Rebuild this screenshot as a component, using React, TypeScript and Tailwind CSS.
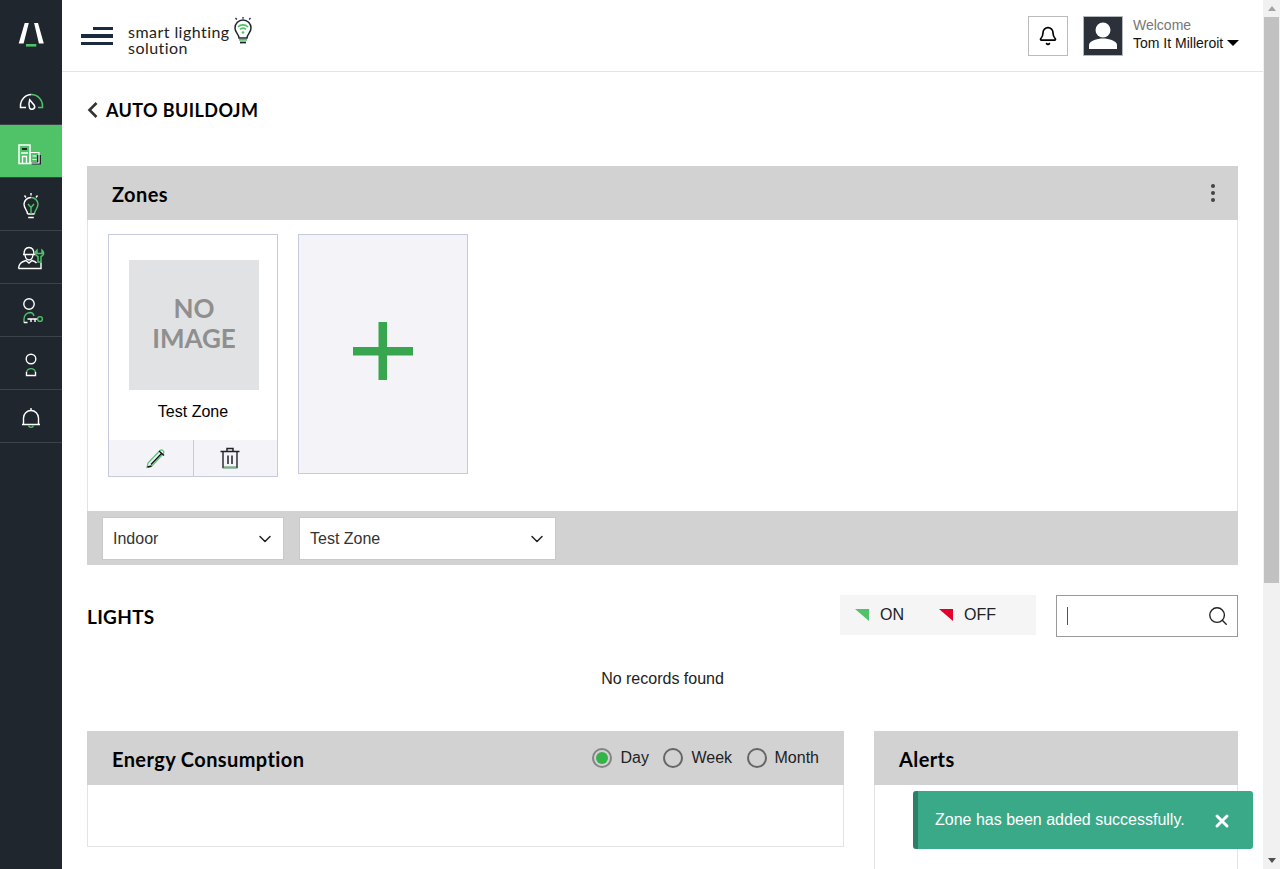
import { Bell, ChevronDown, Search, X } from 'lucide-react'

const display = 'font-["Lato",sans-serif]'

function NavDash() {
  return (
    <svg width="62" height="52" viewBox="0 0 62 52" fill="none" strokeWidth="1.5">
      <path d="M26 35.5H20.5V34A11.2 11.2 0 0 1 31.5 22.5" stroke="#fff" />
      <path d="M31.5 22.5A11.2 11.2 0 0 1 42.5 34V35.5H38" stroke="#4fc268" />
      <path d="M29.7 27.8L34.4 33.5A2.6 2.6 0 0 1 29.5 35.6C28.7 33.5 29 30 29.7 27.8Z" stroke="#fff" />
    </svg>
  )
}

function NavBuilding() {
  return (
    <svg width="62" height="52" viewBox="0 0 62 52" fill="none">
      <path d="M37 30H41V39.5H32V37H37Z" fill="#1f262e" />
      <path d="M19 20H30V38.5H19Z" stroke="#fff" strokeWidth="1.5" />
      <path d="M30 27.5H39V38H30Z" stroke="#fff" strokeWidth="1.2" />
      <path d="M21 28H28M22.5 38V31.5H26.5V38" stroke="#fff" strokeWidth="1.3" />
      <path d="M22 23H27V25H22Z" fill="#1f262e" />
      <path d="M32.5 31H36.5M32.5 34.5H36.5" stroke="#fff" strokeWidth="1.2" />
    </svg>
  )
}

function NavBulb() {
  return (
    <svg width="62" height="52" viewBox="0 0 62 52" fill="none" strokeWidth="1.4">
      <path d="M27.5 36C27.5 31.5 24 31 24 26A7 7 0 0 1 31 19.5" stroke="#fff" />
      <path d="M31 19.5A7 7 0 0 1 38 26C38 31 34.5 31.5 34.5 36" stroke="#4fc268" />
      <path d="M27.5 36H34.5M28.2 39.5H33.8" stroke="#fff" />
      <path d="M28 26L31 29.5L34 26M31 29.5V36" stroke="#4fc268" />
      <path d="M31 15V17.5M24.5 17.5L26 19.5M37.5 17.5L36 19.5" stroke="#fff" />
    </svg>
  )
}

function NavEngineer() {
  return (
    <svg width="62" height="52" viewBox="0 0 62 52" fill="none" strokeWidth="1.4">
      <path d="M24 23.5C24 19 26 16.5 29 16.5S34 19 34 23.5M23 23.5H35" stroke="#fff" />
      <path d="M25 24C25.5 27.5 27 29 29 29S32.5 27.5 33 24" stroke="#fff" />
      <path d="M18.5 37.5C19 32.5 21 31 26 29.5L29 32L32 29.5C34 30 35.5 30.5 36.5 32M18.5 37.5H41V31.5" stroke="#fff" />
      <path d="M37 19C34.5 21 35 24.5 38 25.5V31H41V25.5C44 24.5 44.5 21 42 19V22.5H37Z" stroke="#4fc268" strokeWidth="1.5" />
    </svg>
  )
}

function NavKey() {
  return (
    <svg width="62" height="52" viewBox="0 0 62 52" fill="none" strokeWidth="1.4">
      <circle cx="29" cy="20" r="5.2" stroke="#fff" />
      <path d="M24 39V35A6.5 6.5 0 0 1 30 28.5C32 28.5 33.5 30 34 32" stroke="#4fc268" />
      <path d="M24 38.5H27.5M27.5 35H38" stroke="#fff" />
      <path d="M31 35V38M35 35V38" stroke="#fff" />
      <circle cx="40" cy="35" r="2.4" stroke="#4fc268" />
    </svg>
  )
}

function NavUser() {
  return (
    <svg width="62" height="52" viewBox="0 0 62 52" fill="none" strokeWidth="1.4">
      <circle cx="31" cy="22" r="4.8" stroke="#fff" />
      <path d="M26.5 35A4.7 4.7 0 0 1 35.5 35" stroke="#4fc268" />
      <path d="M26.5 35V38.5H35.5V35" stroke="#fff" />
    </svg>
  )
}

function NavBell() {
  return (
    <svg width="62" height="52" viewBox="0 0 62 52" fill="none" strokeWidth="1.4">
      <path d="M23.5 34V28A7.5 7.5 0 0 1 38.5 28V34" stroke="#fff" />
      <path d="M22 34.5H40M31 18V20.5" stroke="#fff" />
      <path d="M28.5 35.5A2.6 2.6 0 0 0 33.5 35.5" stroke="#4fc268" />
    </svg>
  )
}

const navItems = [NavDash, NavBuilding, NavBulb, NavEngineer, NavKey, NavUser, NavBell]

function Sidebar() {
  return (
    <aside className="w-[62px] shrink-0 bg-[#1f262e]">
      <div className="h-[72px] flex items-center justify-center">
        <svg width="62" height="72" viewBox="0 0 62 72">
          <path d="M24.7 23H28.8L23.6 43.5H18.7ZM34.1 23H38L43.8 43.5H38.9Z" fill="#fff" />
          <path d="M26 44H36.3V46.6H26Z" fill="#4fc268" />
        </svg>
      </div>
      {navItems.map((Icon, i) => (
        <div
          key={i}
          className={`h-[53px] border-b border-[#3c4249] ${i === 1 ? 'bg-[#50c368]' : ''}`}
        >
          <Icon />
        </div>
      ))}
    </aside>
  )
}

function HeaderBulb() {
  return (
    <svg width="22" height="30" viewBox="0 0 22 30" fill="none" className="ml-[2px] -mt-[12px]">
      <path d="M7 23C7 19 3 18 3 13A8 8 0 0 1 19 13C19 18 15 19 15 23Z" stroke="#1f262e" strokeWidth="1.5" />
      <path d="M7 24.8H15" stroke="#4fc268" strokeWidth="1.8" />
      <path d="M8 27.5H14" stroke="#1f262e" strokeWidth="1.8" />
      <path d="M6 12A7 7 0 0 1 16 12M8 14.5A4 4 0 0 1 14 14.5" stroke="#4fc268" strokeWidth="1.6" />
      <circle cx="11" cy="17.5" r="1.3" fill="#4fc268" />
      <path d="M11 2V3.8M3.5 3L4.8 4.5M18.5 3L17.2 4.5" stroke="#1f262e" strokeWidth="1.3" />
    </svg>
  )
}

function Header() {
  return (
    <header className="h-[72px] shrink-0 border-b border-[#e4e4e4] flex items-center pl-[19px] pr-[24px] bg-white">
      <div className="w-[32px] flex flex-col items-end gap-[4px]">
        <span className="block h-[3px] w-[20px] bg-[#1a2a3f]" />
        <span className="block h-[4px] w-[32px] bg-[#1a2a3f]" />
        <span className="block h-[3px] w-[32px] bg-[#1a2a3f]" />
      </div>
      <div className={`ml-[15px] mt-[9px] text-[16px] leading-[16px] tracking-[0.45px] text-[#222] ${display}`}>
        <div>smart lighting</div>
        <div>solution</div>
      </div>
      <HeaderBulb />
      <div className="ml-auto flex items-center">
        <div className="w-[40px] h-[40px] border border-[#bbbbbb] flex items-center justify-center">
          <Bell size={20} strokeWidth={2} color="#000" />
        </div>
        <div className="ml-[15px] w-[40px] h-[40px] bg-[#2c3038] border border-[#b5b8bc]">
          <svg width="38" height="38" viewBox="0 0 38 38">
            <circle cx="19" cy="13" r="7.5" fill="#fff" />
            <path d="M5 32V28C5 24 13 21.5 19 21.5S33 24 33 28V32Z" fill="#fff" />
          </svg>
        </div>
        <div className="ml-[10px] -mt-[4px] font-['Liberation_Sans',sans-serif] text-[14px] leading-[18px] w-[106px]">
          <div className="text-[#777777]">Welcome</div>
          <div className="flex items-center whitespace-nowrap text-[#111]">
            Tom It Milleroit
            <span className="ml-[4px] shrink-0 border-x-[6px] border-x-transparent border-t-[6px] border-t-black" />
          </div>
        </div>
      </div>
    </header>
  )
}

function SectionBar({ title, children }: { title: string; children?: React.ReactNode }) {
  return (
    <div className="h-[54px] bg-[#d2d2d2] flex items-center justify-between pl-[25px] pr-[25px]">
      <h2 className={`pt-[1px] text-[20px] font-bold text-black tracking-[0.4px] ${display}`}>{title}</h2>
      {children}
    </div>
  )
}

function ZoneCard() {
  return (
    <div className="w-[170px] h-[243px] border border-[#c5cbdc] flex flex-col bg-white">
      <div className={`mt-[25px] ml-[20px] w-[130px] h-[130px] bg-[#e1e2e3] flex items-center justify-center text-center text-[#8f8f8f] font-bold text-[26px] leading-[30px] ${display}`}>
        <div className="-mt-[4px]">NO<br />IMAGE</div>
      </div>
      <div className="mt-[13px] text-center text-[16px] leading-[18px] text-black font-['Liberation_Sans',sans-serif]">Test Zone</div>
      <div className="mt-auto h-[36px] bg-[#f3f3f8] flex">
        <div className="w-[85px] border-r border-[#c5cbdc] flex items-center justify-center pl-[10px]">
          <svg width="24" height="24" viewBox="0 0 24 24" fill="none">
            <path d="M4 17L16 4.5C18 3 21 5.5 19.5 7.5L7.5 20.5L3 21.5Z" stroke="#5ac377" strokeWidth="1.2" />
            <path d="M7 18.5L18 7M15 5L20 9.5M7.5 20L3.5 21" stroke="#111" strokeWidth="1.3" />
          </svg>
        </div>
        <div className="flex-1 flex items-center justify-center pr-[12px]">
          <svg width="22" height="24" viewBox="0 0 22 24" fill="none">
            <path d="M1.5 5.5H20.5M8 5V2.5H14V5" stroke="#222" strokeWidth="1.5" />
            <path d="M4 6V21.5H18V6" stroke="#222" strokeWidth="1.4" />
            <path d="M4.5 21.5H17.5" stroke="#5ac377" strokeWidth="1.6" />
            <path d="M9 9.5V18M13 9.5V18" stroke="#222" strokeWidth="1.5" />
          </svg>
        </div>
      </div>
    </div>
  )
}

function AddCard() {
  return (
    <div className="ml-[20px] w-[170px] h-[240px] border border-[#c5cbdc] bg-[#f3f3f8] flex items-center justify-center">
      <svg width="60" height="60" viewBox="0 0 60 60" className="-mt-[6px]">
        <path d="M25.5 1H34V59H25.5ZM0 26H60V34.5H0Z" fill="#38a64f" />
      </svg>
    </div>
  )
}

function SelectBox({ label, width }: { label: string; width: string }) {
  return (
    <div className={`${width} h-[43px] bg-white border border-[#c9c9c9] flex items-center justify-between pl-[10px] pr-[8px] text-[16px] text-[#333] font-['Liberation_Sans',sans-serif]`}>
      {label}
      <ChevronDown size={20} strokeWidth={1.8} color="#222" />
    </div>
  )
}

function Radio({ label, checked }: { label: string; checked?: boolean }) {
  return (
    <div className="flex items-center gap-[8px] text-[16px] text-[#222] font-['Liberation_Sans',sans-serif]">
      <span className={`w-[20px] h-[20px] rounded-full border-2 flex items-center justify-center ${checked ? 'border-[#848484]' : 'border-[#666666]'}`}>
        {checked && <span className="w-[12px] h-[12px] rounded-full bg-[#36b24a]" />}
      </span>
      {label}
    </div>
  )
}

function LegendMark({ color }: { color: string }) {
  return (
    <svg width="14" height="12" viewBox="0 0 14 12">
      <path d="M0 0H14V12Z" fill={color} />
    </svg>
  )
}

function Scrollbar() {
  return (
    <div className="w-[17px] shrink-0 bg-[#f1f1f1] flex flex-col items-center">
      <div className="h-[17px] flex items-center justify-center">
        <span className="border-x-[4px] border-x-transparent border-b-[5px] border-b-[#a3a3a3]" />
      </div>
      <div className="w-[15px] h-[566px] bg-[#c1c1c1]" />
      <div className="mt-auto h-[17px] flex items-center justify-center">
        <span className="border-x-[4px] border-x-transparent border-t-[5px] border-t-[#505050]" />
      </div>
    </div>
  )
}

export default function App() {
  return (
    <div className="relative h-[869px] w-[1280px] flex overflow-hidden bg-white">
      <Sidebar />
      <main className="flex-1 min-w-0 flex flex-col overflow-hidden">
        <Header />
        <div className="px-[25px]">
          <div className="mt-[24px] h-[28px] flex items-center">
            <svg width="12" height="18" viewBox="0 0 12 18" fill="none">
              <path d="M9.5 2L2.5 9L9.5 16" stroke="#333" strokeWidth="2.6" />
            </svg>
            <h1 className={`ml-[7px] text-[18px] font-bold text-black tracking-[0.4px] ${display}`}>AUTO BUILDOJM</h1>
          </div>

          <section className="mt-[42px]">
            <SectionBar title="Zones">
              <div className="flex flex-col gap-[3px] -mr-[2px]">
                <span className="w-[4px] h-[4px] rounded-full bg-[#444]" />
                <span className="w-[4px] h-[4px] rounded-full bg-[#444]" />
                <span className="w-[4px] h-[4px] rounded-full bg-[#444]" />
              </div>
            </SectionBar>
            <div className="h-[291px] border-x border-[#e3e3e3] pl-[20px] pt-[14px] flex items-start">
              <ZoneCard />
              <AddCard />
            </div>
            <div className="h-[54px] bg-[#d2d2d2] flex items-start pt-[6px] pl-[15px] gap-[15px]">
              <SelectBox label="Indoor" width="w-[182px]" />
              <SelectBox label="Test Zone" width="w-[257px]" />
            </div>
          </section>

          <div className="mt-[30px] flex items-start">
            <h2 className={`mt-[8px] text-[19px] font-bold text-black leading-[28px] tracking-[0.3px] ${display}`}>LIGHTS</h2>
            <div className="ml-auto w-[196px] h-[40px] bg-[#f5f5f5] flex items-center pl-[15px] text-[16px] text-[#222] font-['Liberation_Sans',sans-serif]">
              <LegendMark color="#50c368" />
              <span className="ml-[11px] w-[59px]">ON</span>
              <LegendMark color="#e4002b" />
              <span className="ml-[11px]">OFF</span>
            </div>
            <div className="ml-[20px] w-[182px] h-[42px] border border-[#999999] flex items-center justify-between pl-[10px] pr-[8px]">
              <span className="w-px h-[18px] bg-[#5a3ea0]" />
              <Search size={22} strokeWidth={1.5} color="#222" />
            </div>
          </div>

          <p className="mt-[33px] text-center text-[16px] leading-[18px] text-[#222] font-['Liberation_Sans',sans-serif]">No records found</p>

          <div className="mt-[43px] flex items-start gap-[30px]">
            <section className="w-[757px]">
              <SectionBar title="Energy Consumption">
                <div className="flex items-center gap-[14.5px]">
                  <Radio label="Day" checked />
                  <Radio label="Week" />
                  <Radio label="Month" />
                </div>
              </SectionBar>
              <div className="h-[62px] border border-t-0 border-[#e3e3e3]" />
            </section>
            <section className="w-[364px]">
              <SectionBar title="Alerts" />
              <div className="h-[200px] border-x border-[#e3e3e3]" />
            </section>
          </div>
        </div>
      </main>
      <Scrollbar />

      <div className="absolute left-[913px] top-[791px] w-[340px] h-[58px] rounded-[3px] bg-[#3aa988] border-l-[5px] border-l-[#2c8069] flex items-center justify-between pl-[17px] pr-[21px] text-[16px] text-white font-['Liberation_Sans',sans-serif]">
        <span>Zone has been added successfully.</span>
        <X size={20} strokeWidth={3.5} color="#fff" className="mt-[2px]" />
      </div>
    </div>
  )
}
